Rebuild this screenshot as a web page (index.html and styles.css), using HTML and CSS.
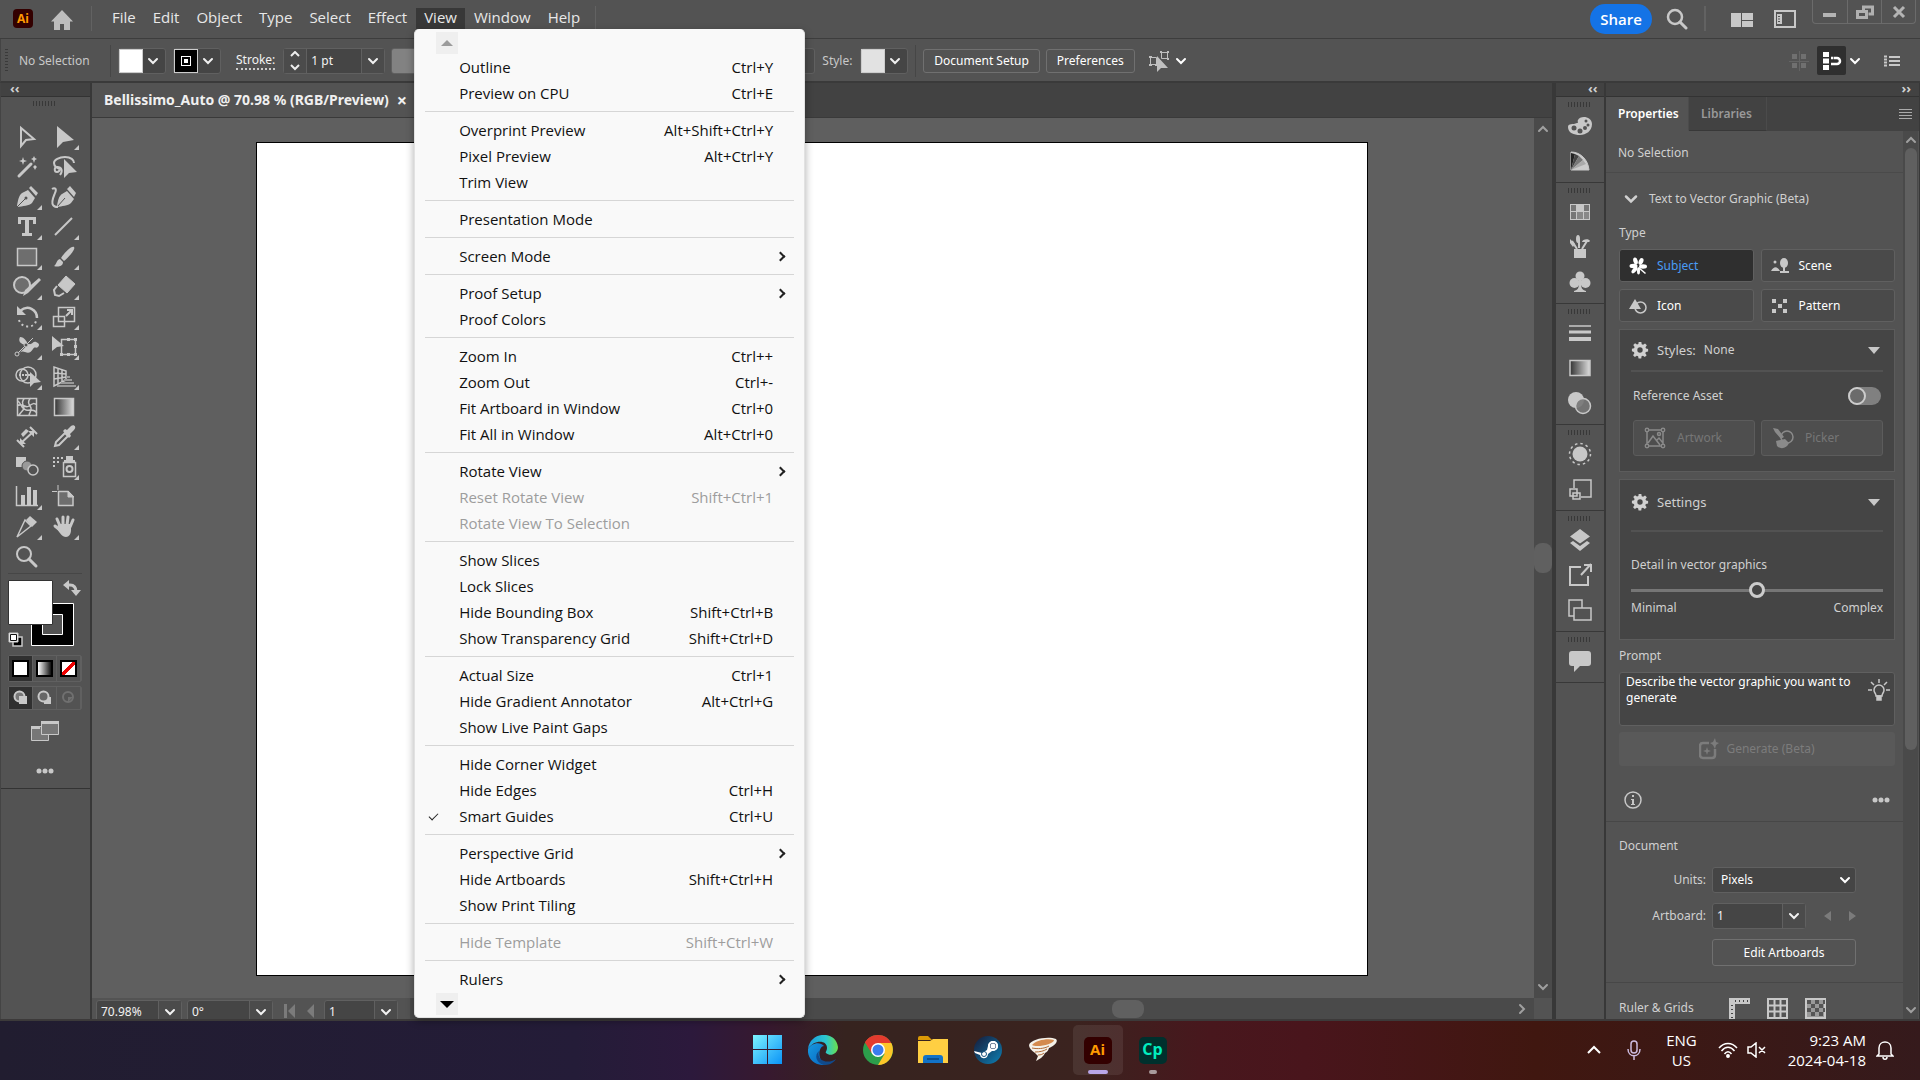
FILE: index.html
```html
<!DOCTYPE html>
<html lang="en">
<head>
<meta charset="utf-8">
<title>Bellissimo_Auto - Illustrator</title>
<link rel="stylesheet" href="styles.css">
</head>
<body>
<svg class="sprite" aria-hidden="true">
  <symbol id="chev" viewBox="0 0 12 8"><path d="M2 2l4 4 4-4" fill="none" stroke="currentColor" stroke-width="2" stroke-linecap="round"/></symbol>
  <symbol id="gear" viewBox="0 0 20 20"><path fill="currentColor" fill-rule="evenodd" d="M8.500 1h3l.4 2.600 1.500.6 2.200-1.500 2 2-1.500 2.200.6 1.500 2.300.4v3l-2.500.4-.6 1.500 1.500 2.100-2 2-2.200-1.500-1.500.6-.3 2.500h-3l-.5-2.500-1.500-.6-2.100 1.500-2-2 1.500-2.200-.6-1.500L1 11.500v-3l2.400-.4.6-1.500-1.500-2.200 2-2L6.700 4l1.500-.6zM10 7a3 3 0 1 0 0 6 3 3 0 0 0 0-6z"/></symbol>
  <symbol id="tri" viewBox="0 0 32 30"><path d="M31 23v5h-5z" fill="#c8c8c8"/></symbol>
</svg>

<div class="app">
  <header class="titlebar">
    <span class="ai-logo">Ai</span>
    <button class="bare home" aria-label="Home"><svg width="24" height="22" viewBox="0 0 24 22"><path d="M12 1L1 12.500h3V21h6v-6h4v6h6v-8.500h3z" fill="#bdbdbd"/></svg></button>
    <nav class="menubar">
      <button>File</button><button>Edit</button><button>Object</button><button>Type</button><button>Select</button><button>Effect</button>
      <div class="menu-anchor">
        <button class="open">View</button>
        <div class="menu">
          <button class="scroller up" aria-label="Scroll up"></button>
          <ul>
            <li><button>Outline<kbd>Ctrl+Y</kbd></button></li>
            <li><button>Preview on CPU<kbd>Ctrl+E</kbd></button></li>
            <li class="sep"></li>
            <li><button>Overprint Preview<kbd>Alt+Shift+Ctrl+Y</kbd></button></li>
            <li><button>Pixel Preview<kbd>Alt+Ctrl+Y</kbd></button></li>
            <li><button>Trim View</button></li>
            <li class="sep"></li>
            <li><button>Presentation Mode</button></li>
            <li class="sep"></li>
            <li><button class="sub">Screen Mode</button></li>
            <li class="sep"></li>
            <li><button class="sub">Proof Setup</button></li>
            <li><button>Proof Colors</button></li>
            <li class="sep"></li>
            <li><button>Zoom In<kbd>Ctrl++</kbd></button></li>
            <li><button>Zoom Out<kbd>Ctrl+-</kbd></button></li>
            <li><button>Fit Artboard in Window<kbd>Ctrl+0</kbd></button></li>
            <li><button>Fit All in Window<kbd>Alt+Ctrl+0</kbd></button></li>
            <li class="sep"></li>
            <li><button class="sub">Rotate View</button></li>
            <li><button disabled>Reset Rotate View<kbd>Shift+Ctrl+1</kbd></button></li>
            <li><button disabled>Rotate View To Selection</button></li>
            <li class="sep"></li>
            <li><button>Show Slices</button></li>
            <li><button>Lock Slices</button></li>
            <li><button>Hide Bounding Box<kbd>Shift+Ctrl+B</kbd></button></li>
            <li><button>Show Transparency Grid<kbd>Shift+Ctrl+D</kbd></button></li>
            <li class="sep"></li>
            <li><button>Actual Size<kbd>Ctrl+1</kbd></button></li>
            <li><button>Hide Gradient Annotator<kbd>Alt+Ctrl+G</kbd></button></li>
            <li><button>Show Live Paint Gaps</button></li>
            <li class="sep"></li>
            <li><button>Hide Corner Widget</button></li>
            <li><button>Hide Edges<kbd>Ctrl+H</kbd></button></li>
            <li><button class="checked">Smart Guides<kbd>Ctrl+U</kbd></button></li>
            <li class="sep"></li>
            <li><button class="sub">Perspective Grid</button></li>
            <li><button>Hide Artboards<kbd>Shift+Ctrl+H</kbd></button></li>
            <li><button>Show Print Tiling</button></li>
            <li class="sep"></li>
            <li><button disabled>Hide Template<kbd>Shift+Ctrl+W</kbd></button></li>
            <li class="sep"></li>
            <li><button class="sub">Rulers</button></li>
          </ul>
          <button class="scroller down" aria-label="Scroll down"></button>
        </div>
      </div>
      <button>Window</button><button>Help</button>
    </nav>
    <div class="title-right">
      <button class="share">Share</button>
      <button class="bare" aria-label="Search"><svg width="22" height="22" viewBox="0 0 22 22" fill="none" stroke="#c8c8c8"><circle cx="9" cy="9" r="7" stroke-width="2.500"/><path d="M14 14l6 6" stroke-width="3" stroke-linecap="round"/></svg></button>
      <span class="tb-rule"></span>
      <button class="bare workspace" aria-label="Arrange documents"><svg width="24" height="16" viewBox="0 0 24 16" fill="#c8c8c8"><path d="M1 1h10v14H1zM12 1h11v7H12zM12 9h11v6H12z"/></svg></button>
      <button class="bare" aria-label="Workspace"><svg width="22" height="18" viewBox="0 0 22 18"><rect x="1" y="1" width="20" height="16" fill="none" stroke="#c8c8c8" stroke-width="2"/><rect x="3" y="4" width="5" height="10" fill="#c8c8c8"/><path d="M4 6.500h2M4 9h2M4 11.500h2" stroke="#535353"/></svg></button>
      <div class="win-buttons">
        <button aria-label="Minimize"><svg width="14" height="14"><path d="M0 8h13v4H0z" fill="#b4b4b4"/></svg></button>
        <button aria-label="Restore"><svg width="18" height="16" viewBox="0 0 18 16" fill="none" stroke="#b0b0b0" stroke-width="3"><path d="M7.500 5V2h9v7h-4"/><path d="M1.500 6.500h9v6h-9z"/></svg></button>
        <button aria-label="Close"><svg width="14" height="14" viewBox="0 0 14 14"><path d="M2 2l10 10M12 2L2 12" stroke="#b4b4b4" stroke-width="3"/></svg></button>
      </div>
    </div>
  </header>

  <section class="controlbar">
    <span class="vgrip"></span>
    <span class="cb-label">No Selection</span>
    <span class="cb-rule"></span>
    <button class="swatch-dd" aria-label="Fill"><i class="chip white"></i><svg width="12" height="8"><use href="#chev"/></svg></button>
    <button class="swatch-dd" aria-label="Stroke color"><i class="chip ring"></i><svg width="12" height="8"><use href="#chev"/></svg></button>
    <label class="stroke-label" for="stroke">Stroke:</label>
    <div class="field stroke-field">
      <button class="stepper" aria-label="Step"><svg width="10" height="20" viewBox="0 0 10 20" fill="none" stroke="#eee" stroke-width="2"><path d="M1 5l4-4 4 4M1 14l4 4 4-4"/></svg></button>
      <input id="stroke" value="1 pt">
      <button aria-label="Stroke weights"><svg width="12" height="8"><use href="#chev"/></svg></button>
    </div>
    <span class="profile"></span>
    <span class="cb-label style-label">Style:</span>
    <button class="swatch-dd" aria-label="Graphic style"><i class="chip pale"></i><svg width="12" height="8"><use href="#chev"/></svg></button>
    <span class="cb-rule"></span>
    <button class="outlined">Document Setup</button>
    <button class="outlined">Preferences</button>
    <button class="bare similar" aria-label="Select similar"><svg width="22" height="22" viewBox="0 0 22 22"><g fill="none" stroke="#c0c0c0"><path d="M2.500 7.500h6v7h-6zM13.500 2.500h6v6h-6z"/></g><path d="M1 6h3v2H1zM1 14h3v2H1zM7 14h2v2H7zM12 1h2v2h-2zM19 1h2v2h-2zM19 8h2v2h-2zM9 6v16l4-4h7z" fill="#c0c0c0"/></svg><svg width="12" height="8"><use href="#chev"/></svg></button>
    <div class="cb-right">
      <svg width="20" height="20" viewBox="0 0 20 20" fill="#707070"><path d="M3 3h5v5H3zM12 3h5v5h-5zM3 12h5v5H3zM12 12h5v5h-5z"/><path d="M10 0h1v20h-1zM0 10h20v1H0z" fill="#646464"/></svg>
      <button class="snap" aria-label="Snap"><svg width="20" height="20" viewBox="0 0 20 20"><path d="M1 1h6v5H1zM1 7.500h6v5H1zM1 14h6v5H1z" fill="#fff"/><path d="M9 7h6a3 3 0 0 1 0 6H9" fill="none" stroke="#fff" stroke-width="2.500" stroke-dasharray="2 .6 20"/></svg></button>
      <svg class="light" width="12" height="8"><use href="#chev"/></svg>
      <svg class="list-ico" width="16" height="12" viewBox="0 0 16 12"><path d="M0 1.500h3M0 4.500h3M0 7.500h3M0 10.500h3M5 2h11M5 6h11M5 10h11" stroke="#c8c8c8" stroke-width="2"/></svg>
    </div>
  </section>

  <div class="workspace-row">
    <aside class="tools">
      <div class="collapse">‹‹</div>
      <div class="tools-body">
        <span class="grip"></span>
        <div class="tool-grid">
          <button aria-label="Selection"><svg viewBox="0 0 32 30"><path d="M10 6v18l5-6 8-1z" fill="none" stroke="#c8c8c8" stroke-width="2"/></svg></button>
          <button aria-label="Direct selection"><svg viewBox="0 0 32 30"><path d="M9 4v22l6-6 11-2z" fill="#c8c8c8"/><use href="#tri"/></svg></button>
          <button aria-label="Magic wand"><svg viewBox="0 0 32 30"><path d="M8 24L20 12" stroke="#c8c8c8" stroke-width="3" stroke-linecap="round"/><path d="M12 5l1 3 3 1-3 1-1 3-1-3-3-1 3-1zM23 4l1 2 2 1-2 1-1 3-1-3-2-1 2-1zM24 13l1 1 1 1-1 1-1 2-1-2-1-1 1-1z" fill="#c8c8c8"/></svg></button>
          <button aria-label="Lasso"><svg viewBox="0 0 32 30"><path d="M14 17c-5 0-8-3-8-6s5-6 11-6 9 3 9 6M9 15c-3 0-3 5 0 5s4-6 0-5m0 0c5 0 6 4 3 8" fill="none" stroke="#c8c8c8" stroke-width="2"/><path d="M16 7v19l5-5 8-1z" fill="#c8c8c8"/></svg></button>
          <button aria-label="Pen"><svg viewBox="0 0 32 30"><path d="M6 24c1-6 2-11 5-13l6-3 7 8-3 5c-3 3-9 3-15 4zM18 6l2-2 7 7-2 3z" fill="#c8c8c8"/><path d="M6 25l9-9" stroke="#535353"/><circle cx="15" cy="16" r="1.500" fill="#535353"/><use href="#tri"/></svg></button>
          <button aria-label="Curvature"><svg viewBox="0 0 32 30"><path d="M9 24c1-6 2-10 5-12l5-3 7 8-3 4c-3 3-9 3-14 4zM19 7l3-3 6 7-2 4z" fill="#c8c8c8"/><path d="M9 25l8-9" stroke="#535353"/><path d="M4 7c3-2 5 0 3 4-2 5-4 9-2 12 1 2 3 2 5 2" fill="none" stroke="#c8c8c8" stroke-width="2"/></svg></button>
          <button aria-label="Type"><svg viewBox="0 0 32 30"><path d="M7 5h18v7h-3V8h-4v13h3v3H11v-3h3V8h-4v4H7z" fill="#c8c8c8"/><use href="#tri"/></svg></button>
          <button aria-label="Line"><svg viewBox="0 0 32 30"><path d="M7 23L24 6" stroke="#c8c8c8" stroke-width="2"/><use href="#tri"/></svg></button>
          <button aria-label="Rectangle"><svg viewBox="0 0 32 30"><path d="M6.500 6.500h19v17h-19z" fill="#6e6e6e" stroke="#c8c8c8" stroke-width="1.500"/><use href="#tri"/></svg></button>
          <button aria-label="Paintbrush"><svg viewBox="0 0 32 30"><path d="M26 5c2 2-6 11-10 14l-3-3C16 11 24 3 26 5zM12 17l3 3c0 5-6 5-9 4 3-2 2-6 6-7z" fill="#c8c8c8"/><use href="#tri"/></svg></button>
          <button aria-label="Shaper"><svg viewBox="0 0 32 30"><circle cx="11" cy="13" r="8" fill="#6e6e6e" stroke="#c8c8c8" stroke-width="2"/><path d="M28 6l2 2-13 13-5 3 2-6z" fill="#c8c8c8"/><use href="#tri"/></svg></button>
          <button aria-label="Eraser"><svg viewBox="0 0 32 30"><path d="M18 4l9 8-8 9-9-8z" fill="#c8c8c8" stroke="#c8c8c8"/><path d="M9 14l-3 4 1 5 4 1 5-3" fill="none" stroke="#c8c8c8" stroke-width="2"/><use href="#tri"/></svg></button>
          <button aria-label="Rotate"><svg viewBox="0 0 32 30"><path d="M9 9c8-7 17-1 17 7" fill="none" stroke="#c8c8c8" stroke-width="2.500"/><path d="M6 4v9h9z" fill="#c8c8c8"/><path d="M8 18c2 8 15 9 17 1" fill="none" stroke="#c8c8c8" stroke-width="2" stroke-dasharray="2 3"/><use href="#tri"/></svg></button>
          <button aria-label="Scale"><svg viewBox="0 0 32 30"><path d="M10.500 5.500h16v14h-16zM5.500 14.500h11v10h-11z" fill="none" stroke="#c8c8c8" stroke-width="1.500"/><path d="M18 14l6-6M19 8h5v5" fill="none" stroke="#c8c8c8" stroke-width="2"/><use href="#tri"/></svg></button>
          <button aria-label="Width"><svg viewBox="0 0 32 30"><path d="M9 5c5 0 6 5 9 7 3 1 4-3 7-2s4 3 2 5-3-1-5 2-4 5-8 3-5 2-8 1l9-8C9 12 7 9 9 5z" fill="#c8c8c8"/><path d="M7 21L22 6" stroke="#535353" stroke-width="2"/><path d="M7 21L22 6" stroke="#c8c8c8"/><circle cx="6" cy="22" r="2" fill="#535353" stroke="#c8c8c8"/><circle cx="15" cy="13" r="2" fill="#535353" stroke="#c8c8c8"/><use href="#tri"/></svg></button>
          <button aria-label="Free transform"><svg viewBox="0 0 32 30"><path d="M13.500 7.500h14v15h-14z" fill="none" stroke="#c8c8c8" stroke-width="1.500"/><path d="M4 4v15l5-4 7-1zM26 6h3v3h-3zM26 13h3v3h-3zM26 21h3v3h-3zM19 21h3v3h-3zM12 21h3v3h-3zM19 6h3v3h-3z" fill="#c8c8c8"/><use href="#tri"/></svg></button>
          <button aria-label="Shape builder"><svg viewBox="0 0 32 30"><circle cx="17" cy="13" r="8" fill="none" stroke="#c8c8c8" stroke-width="1.500"/><circle cx="11" cy="13" r="6" fill="none" stroke="#c8c8c8" stroke-width="1.500"/><path d="M8 13h12" stroke="#c8c8c8" stroke-width="2" stroke-dasharray="2 1"/><path d="M19 10v15l4-4 7-1z" fill="#c8c8c8"/><use href="#tri"/></svg></button>
          <button aria-label="Perspective grid"><svg viewBox="0 0 32 30"><path d="M6 5v19l12-6V9zM10 6v16M14 8v12M6 11l12 1M6 17l12-2" fill="none" stroke="#c8c8c8" stroke-width="1.500"/><path d="M18 15h4M16 18h8M13 21h13M9 24h19" stroke="#999" stroke-width="2"/><use href="#tri"/></svg></button>
          <button aria-label="Mesh"><svg viewBox="0 0 32 30"><path d="M6.500 6.500h19v17h-19zM6 14c5-4 8 3 12 0s5-3 8-1M8 23c5-7 6-5 4-10s1-4 1-7M20 6c-5 4-1 7 0 10s-2 4-2 8M6 8c5 4 4 9 9 10s7-2 11 3" fill="none" stroke="#c8c8c8" stroke-width="1.500"/></svg></button>
          <button aria-label="Gradient"><svg viewBox="0 0 32 30"><defs><linearGradient id="g1"><stop offset="0" stop-color="#333"/><stop offset="1" stop-color="#ddd"/></linearGradient></defs><path d="M6.500 6.500h19v17h-19z" fill="url(#g1)" stroke="#c8c8c8" stroke-width="1.500"/></svg></button>
          <button aria-label="Measure"><svg viewBox="0 0 32 30"><path d="M9 22L23 9M6 18l7 7M19 5l7 7" stroke="#c8c8c8" stroke-width="2"/><path d="M9 16v6h6zM23 15V9h-6zM10 12l5-5 3 2-6 6z" fill="#c8c8c8"/></svg></button>
          <button aria-label="Eyedropper"><svg viewBox="0 0 32 30"><path d="M17 11l3 3-9 9-4 1 1-4z" fill="none" stroke="#c8c8c8" stroke-width="2"/><path d="M15 9l2-2 2 1 4-4c3-2 6 1 3 4l-4 4 1 2-2 2z" fill="#c8c8c8"/><use href="#tri"/></svg></button>
          <button aria-label="Blend"><svg viewBox="0 0 32 30"><path d="M5 5h10v10H5z" fill="#c8c8c8"/><circle cx="16" cy="14" r="5" fill="#999" stroke="#535353"/><circle cx="22" cy="18" r="5" fill="#535353" stroke="#c8c8c8" stroke-width="1.500"/></svg></button>
          <button aria-label="Symbol sprayer"><svg viewBox="0 0 32 30"><path d="M15.500 10.500h12v14h-12z" fill="none" stroke="#c8c8c8" stroke-width="1.500"/><circle cx="21.500" cy="17" r="3" fill="none" stroke="#c8c8c8" stroke-width="2"/><path d="M18 4h7v4h2v3H16V8h2z" fill="#c8c8c8"/><path d="M5 6h2M9 6h2M13 6h2M5 10h2M9 10h2M5 14h2" stroke="#c8c8c8" stroke-width="2"/><use href="#tri"/></svg></button>
          <button aria-label="Graph"><svg viewBox="0 0 32 30"><path d="M5.500 4v19.500H27" fill="none" stroke="#c8c8c8" stroke-width="1.500"/><path d="M10 13h4v10h-4zM16 5h4v18h-4zM22 8h4v15h-4z" fill="#c8c8c8"/><use href="#tri"/></svg></button>
          <button aria-label="Artboard"><svg viewBox="0 0 32 30"><path d="M10.500 9.500H20l5 5v9H10.500z" fill="#6e6e6e" stroke="#c8c8c8" stroke-width="1.500"/><path d="M20 9v6h6zM10 3v5M4 9.500h5" fill="#c8c8c8" stroke="#c8c8c8"/></svg></button>
          <button aria-label="Slice"><svg viewBox="0 0 32 30"><path d="M6 25l8-17 6 6z" fill="none" stroke="#c8c8c8" stroke-width="1.500"/><path d="M15 8l4-4 7 6-5 5z" fill="#c8c8c8"/><use href="#tri"/></svg></button>
          <button aria-label="Hand"><svg viewBox="0 0 32 30"><path d="M12 14L9 7M15 13V5M19 13l1-8M22 15l3-7M12 18l-5-4" stroke="#c8c8c8" stroke-width="3" stroke-linecap="round"/><path d="M10 12h13v6c0 4-2 7-5 7-4 0-6-4-9-8z" fill="#c8c8c8"/><use href="#tri"/></svg></button>
          <button aria-label="Zoom"><svg viewBox="0 0 32 30"><circle cx="13" cy="12" r="7" fill="none" stroke="#c8c8c8" stroke-width="2"/><path d="M18 17l7 7" stroke="#c8c8c8" stroke-width="3" stroke-linecap="round"/></svg></button>
        </div>
        <hr>
        <svg class="fillstroke" width="74" height="70" viewBox="0 0 74 70"><path d="M23.500 23.500h42v42h-42z" fill="#000" stroke="#fff"/><path d="M34.500 34.500h20v20h-20z" fill="#535353" stroke="#fff"/><path d="M.5.5h44v44H.5z" fill="#fff" stroke="#333"/><path d="M58 5h4c4 0 6 2 6 7" fill="none" stroke="#c8c8c8" stroke-width="3"/><path d="M55 5l6-5v10zM63 10h10l-5 6z" fill="#c8c8c8"/><path d="M5 57h9v9H5z" fill="#000" stroke="#c8c8c8" stroke-width="1.500"/><path d="M1 53h9v9H1z" fill="#fff" stroke="#c8c8c8"/><path d="M2.500 54.500h6v6h-6z" fill="#fff" stroke="#111"/></svg>
        <div class="mode-row"><button class="on" aria-label="Color"><i class="m-white"></i></button><button aria-label="Gradient fill"><i class="m-grad"></i></button><button aria-label="None"><i class="m-none"></i></button></div>
        <div class="mode-row draw"><button class="on" aria-label="Draw normal"><svg width="16" height="16"><circle cx="6.500" cy="6.500" r="5" fill="#777" stroke="#c8c8c8" stroke-width="2"/><path d="M6 6h8v8H6z" fill="#c8c8c8"/></svg></button><button aria-label="Draw behind"><svg width="16" height="16"><path d="M7 7h7v7H7z" fill="#c8c8c8"/><circle cx="6.500" cy="6.500" r="5" fill="#666" stroke="#c8c8c8" stroke-width="2"/></svg></button><button aria-label="Draw inside"><svg width="16" height="16"><circle cx="7" cy="7" r="5" fill="none" stroke="#707070" stroke-width="2"/><path d="M7 7h5l-5 5z" fill="#707070"/></svg></button></div>
        <svg class="screenmode" width="30" height="22" viewBox="0 0 30 22" fill="#777" stroke="#c8c8c8"><path d="M1.500 6.500h17v14h-17z"/><path d="M11.500 1.500h17v13h-17z"/><path d="M11 2.500h18M1 7.500h9" stroke-width="3"/></svg>
        <svg class="dots" width="18" height="6" fill="#c8c8c8"><circle cx="3" cy="3" r="2.500"/><circle cx="9" cy="3" r="2.500"/><circle cx="15" cy="3" r="2.500"/></svg>
      </div>
    </aside>

    <main class="document">
      <div class="tabs"><div class="tab">Bellissimo_Auto @ 70.98 % (RGB/Preview)<button class="bare" aria-label="Close tab">×</button></div></div>
      <div class="stage">
        <div class="canvas"><div class="artboard"></div></div>
        <div class="vscroll"><svg class="flip" width="12" height="8"><use href="#chev"/></svg><span class="thumb"></span><svg width="12" height="8"><use href="#chev"/></svg></div>
      </div>
      <div class="status">
        <div class="field zoomf"><input aria-label="Zoom" value="70.98%"><button aria-label="Zoom levels"><svg width="12" height="8"><use href="#chev"/></svg></button></div>
        <div class="field zoomf rot"><input aria-label="Rotation" value="0°"><button aria-label="Rotations"><svg width="12" height="8"><use href="#chev"/></svg></button></div>
        <svg class="pager" width="32" height="16" fill="#7b7b7b"><path d="M0 1h3v14H0zM11 1v14L4 8zM30 1v14l-7-7z"/></svg>
        <div class="field pagef"><input aria-label="Artboard number" value="1"><button aria-label="Artboards"><svg width="12" height="8"><use href="#chev"/></svg></button></div>
        <div class="hscroll"><span class="thumb"></span><svg class="right" width="12" height="8"><use href="#chev"/></svg></div>
      </div>
    </main>

    <aside class="dock">
      <div class="collapse">‹‹</div>
      <div class="dock-group"><span class="grip"></span>
        <button aria-label="Color"><svg viewBox="0 0 24 24"><path d="M10 6c2-5 14-4 14 4 0 7-6 11-12 11S0 19 0 13c0-4 5-2 9-4 2 0 0-2 1-3z" fill="#c8c8c8"/><g fill="#535353"><circle cx="6" cy="14" r="2.500"/><circle cx="12" cy="17" r="2.500"/><circle cx="17" cy="14" r="2"/><circle cx="20" cy="11" r="1.500"/><circle cx="18" cy="7" r="1.500"/></g></svg></button>
        <button aria-label="Color guide"><svg viewBox="0 0 24 24"><path d="M3 21V3c9 0 17 7 18 18z" fill="#ccc" stroke="#c8c8c8"/><path d="M3 21V4l4 1z" fill="#222"/><path d="M3 21L7 5l4 2z" fill="#444"/><path d="M3 21l8-14 4 4z" fill="#777"/><path d="M3 21l12-10 3 4z" fill="#aaa"/></svg></button></div>
      <div class="dock-group"><span class="grip"></span>
        <button aria-label="Swatches"><svg viewBox="0 0 24 24"><path d="M2 4h20v16H2z" fill="#c8c8c8"/><path d="M3 5h5v6H3zM16 5h5v6h-5zM3 12h5v7H3z" fill="#777"/><path d="M9 12h6v7H9zM16 12h5v7h-5z" fill="#888"/></svg></button>
        <button aria-label="Brushes"><svg viewBox="0 0 24 24"><path d="M6 14h12v9H6z" fill="#c8c8c8"/><path d="M9 14L4 6M11 13V4M14 14l5-8" stroke="#c8c8c8" stroke-width="2"/><ellipse cx="10" cy="4" rx="2" ry="4" fill="#c8c8c8"/><path d="M2 4l5 5-2 3-3-4zM14 7c0-3 7-4 8-1l-1 1z" fill="#c8c8c8"/></svg></button>
        <button aria-label="Symbols"><svg viewBox="0 0 24 24" fill="#c8c8c8"><circle cx="12" cy="6" r="4.500"/><circle cx="6.500" cy="13" r="5"/><circle cx="17.500" cy="13" r="5"/><path d="M10 9h4l-1 3c0 6 1 8 5 9v1H6v-1c4-1 5-3 5-9z"/></svg></button></div>
      <div class="dock-group"><span class="grip"></span>
        <button aria-label="Stroke"><svg viewBox="0 0 24 24" stroke="#c8c8c8"><path d="M1 5h22" stroke-width="1.500"/><path d="M1 11h22" stroke-width="3"/><path d="M1 18h22" stroke-width="4"/></svg></button>
        <button aria-label="Gradient"><svg viewBox="0 0 24 24"><path d="M2 4.500h20v15H2z" fill="url(#g1)" stroke="#c8c8c8" stroke-width="1.500"/></svg></button>
        <button aria-label="Transparency"><svg viewBox="0 0 24 24"><circle cx="8" cy="9" r="8" fill="#c8c8c8"/><circle cx="15" cy="15" r="7.500" fill="#777" fill-opacity=".9" stroke="#c8c8c8" stroke-width="1.500"/></svg></button></div>
      <div class="dock-group"><span class="grip"></span>
        <button aria-label="Appearance"><svg viewBox="0 0 24 24"><circle cx="12" cy="12" r="7.500" fill="#c8c8c8"/><circle cx="12" cy="12" r="10.500" fill="none" stroke="#c8c8c8" stroke-width="1.500" stroke-dasharray="2.500 3"/></svg></button>
        <button aria-label="Graphic styles"><svg viewBox="0 0 24 24" fill="none" stroke="#c8c8c8" stroke-width="1.500"><path d="M6 11V3h17v17H13"/><path d="M2 12h7v7H2z"/><path d="M5 16h7v6H5z"/></svg></button></div>
      <div class="dock-group"><span class="grip"></span>
        <button aria-label="Layers"><svg viewBox="0 0 24 24" fill="#c8c8c8"><path d="M12 1l10 7.500-10 7L2 8.500zM2 15l3-2 7 5 7-5 3 2-10 8z"/></svg></button>
        <button aria-label="Asset export"><svg viewBox="0 0 24 24" fill="none" stroke="#c8c8c8" stroke-width="2"><path d="M13 4H2v18h18v-9"/><path d="M13 12L23 1M16 2h7v7"/></svg></button>
        <button aria-label="Artboards"><svg viewBox="0 0 24 24" stroke="#c8c8c8" stroke-width="1.500" fill="#535353"><path d="M1 2h13v16H1z"/><path d="M6 10h17v12H6z"/></svg></button></div>
      <div class="dock-group"><span class="grip"></span>
        <button aria-label="Comments"><svg viewBox="0 0 24 24"><path d="M4 2h16q3 0 3 3v9q0 3-3 3h-8l-6 6v-6H4q-3 0-3-3V5q0-3 3-3z" fill="#c8c8c8"/></svg></button></div>
    </aside>

    <aside class="panel">
      <div class="collapse right">››</div>
      <div class="panel-tabs"><button class="active">Properties</button><button>Libraries</button><span class="burger"></span></div>
      <div class="panel-body">
        <div class="props">
          <p class="sel">No Selection</p>
          <section class="t2v">
            <h2><svg width="16" height="10"><use href="#chev"/></svg>Text to Vector Graphic (Beta)</h2>
            <p class="cap">Type</p>
            <div class="types">
              <button class="on"><svg viewBox="0 0 18 18"><g fill="#fff"><ellipse cx="6.500" cy="4" rx="2.200" ry="3.500" transform="rotate(-15 6.500 4)"/><ellipse cx="12" cy="4.500" rx="2.200" ry="3.500" transform="rotate(25 12 4.500)"/><ellipse cx="14" cy="9.500" rx="4" ry="2.200"/><ellipse cx="4.500" cy="9" rx="4" ry="2.200"/><ellipse cx="5.500" cy="13" rx="4" ry="2" transform="rotate(-50 5.500 13)"/><ellipse cx="9.500" cy="14" rx="1.500" ry="3.500"/><path d="M10 10l7 6-1 1-7-6z"/></g></svg>Subject</button>
              <button><svg viewBox="0 0 18 18" fill="#c8c8c8"><path d="M0 14c3-5 6-5 9 0zM9 14h9v2H9zM12 8h2v7h-2z"/><circle cx="4" cy="5" r="1.500"/><ellipse cx="13" cy="6" rx="4" ry="5"/></svg>Scene</button>
              <button><svg viewBox="0 0 18 18"><path d="M6 2l6 10H0z" fill="#c8c8c8"/><circle cx="11.500" cy="10.500" r="5.500" fill="none" stroke="#c8c8c8" stroke-width="1.500"/></svg>Icon</button>
              <button><svg viewBox="0 0 18 18" fill="#c8c8c8"><path d="M1 2h4v4H1zM12 2h4v4h-4zM7 7h4v4H7zM1 12h4v4H1zM12 12h4v4h-4z"/></svg>Pattern</button>
            </div>
            <div class="box styles-box">
              <div class="box-head"><svg width="18" height="18"><use href="#gear"/></svg><span>Styles:</span><span class="small">None</span><i class="caret"></i></div>
              <div class="toggle-row"><label for="ref">Reference Asset</label><input type="checkbox" id="ref"></div>
              <div class="asset-row">
                <button disabled><svg viewBox="0 0 22 22" fill="none" stroke="#8a8a8a" stroke-width="1.500"><path d="M3 3h16v16H3zM4 16l5-7 7 9M13 13l2-2 4 5"/><circle cx="15" cy="7" r="1.500"/><g fill="#454545"><circle cx="3" cy="3" r="1.700"/><circle cx="19" cy="3" r="1.700"/><circle cx="3" cy="19" r="1.700"/><circle cx="19" cy="19" r="1.700"/></g></svg>Artwork</button>
                <button disabled><svg viewBox="0 0 22 22"><circle cx="15" cy="10" r="6" fill="none" stroke="#8a8a8a" stroke-width="1.500"/><path d="M1 1l5 1 6 8-3 2-6-7zM4 14l9-2 4 4c-2 5-8 7-12 3z" fill="#8a8a8a"/></svg>Picker</button>
              </div>
            </div>
            <div class="box settings-box">
              <div class="box-head"><svg width="18" height="18"><use href="#gear"/></svg><span>Settings</span><i class="caret"></i></div>
              <label for="detail">Detail in vector graphics</label>
              <input type="range" id="detail" min="0" max="100" value="50">
              <div class="ends"><span>Minimal</span><span>Complex</span></div>
            </div>
            <label class="cap prompt-cap" for="prompt">Prompt</label>
            <div class="prompt"><textarea id="prompt">Describe the vector graphic you want to generate</textarea><svg width="22" height="24" viewBox="0 0 22 24" fill="none" stroke="#c8c8c8" stroke-width="1.500"><path d="M11 0v4M3 3l3 3M19 3l-3 3M0 11h4M18 11h4M8 17c0-3-2-3-2-6a5 5 0 0 1 10 0c0 3-2 3-2 6z"/><path d="M9 17h4v4H9z" fill="#c8c8c8"/></svg></div>
            <button class="generate" disabled><svg width="20" height="22" viewBox="0 0 20 22"><path d="M10 5H4q-3 0-3 3v9q0 3 3 3h9q3 0 3-3v-6" fill="none" stroke="#7c7c7c" stroke-width="2.500"/><path d="M16 0l1 4 3 1-3 2-1 4-2-4-3-2 3-1zM8 9l1 3 3 1-3 1-1 3-1-3-3-1 3-1z" fill="#7c7c7c"/></svg>Generate (Beta)</button>
            <div class="info-row"><svg width="18" height="18" viewBox="0 0 18 18"><circle cx="9" cy="9" r="8" fill="none" stroke="#c8c8c8" stroke-width="1.500"/><path d="M7 8h3v5h1v1H7v-1h1V9H7zM8 4h2v2H8z" fill="#c8c8c8"/></svg><svg class="dots" width="18" height="6" fill="#c8c8c8"><circle cx="3" cy="3" r="2.500"/><circle cx="9" cy="3" r="2.500"/><circle cx="15" cy="3" r="2.500"/></svg></div>
          </section>
          <section class="docsec">
            <h3>Document</h3>
            <div class="form">
              <label for="units">Units:</label>
              <div class="selectwrap"><select id="units"><option>Pixels</option></select><svg width="12" height="8"><use href="#chev"/></svg></div>
              <label for="ab">Artboard:</label>
              <div class="ab-row"><div class="field"><input id="ab" value="1"><button aria-label="Choose artboard"><svg width="12" height="8"><use href="#chev"/></svg></button></div><svg width="32" height="12" fill="#7b7b7b"><path d="M7 1v10L0 6zM25 1v10l7-5z"/></svg></div>
              <span></span><button class="outlined">Edit Artboards</button>
            </div>
          </section>
          <section class="rulers"><h3>Ruler &amp; Grids</h3>
            <svg width="22" height="22" viewBox="0 0 22 22"><path d="M0 0h21v6H6v16H0z" fill="#c8c8c8"/><path d="M6 3h14M3 7v14" stroke="#444" stroke-width="2" stroke-dasharray="1 3"/></svg>
            <svg width="22" height="22" viewBox="0 0 22 22"><path d="M1 1h19v19H1zM7.500 1v19M13.500 1v19M1 7.500h19M1 13.500h19" fill="none" stroke="#c8c8c8" stroke-width="2"/></svg>
            <svg width="22" height="22" viewBox="0 0 22 22"><path d="M1 1h19v19H1z" fill="#999" stroke="#c8c8c8" stroke-width="2"/><path d="M2 4h18M2 12h18" stroke="#555" stroke-width="4" stroke-dasharray="4 4"/><path d="M6 8h14M6 16h14" stroke="#555" stroke-width="4" stroke-dasharray="4 4"/></svg>
          </section>
        </div>
        <div class="pscroll"><svg class="flip" width="12" height="8"><use href="#chev"/></svg><span class="thumb"></span><svg width="12" height="8"><use href="#chev"/></svg></div>
      </div>
    </aside>
  </div>
</div>

<footer class="taskbar">
  <span></span>
  <div class="apps">
    <button aria-label="Start"><svg width="30" height="30" viewBox="0 0 30 30"><defs><linearGradient id="w" x2="1" y2="1"><stop offset="0" stop-color="#7df3ff"/><stop offset="1" stop-color="#0a93f7"/></linearGradient></defs><path d="M0 0h14v14H0zM15 0h14v14H15zM0 15h14v14H0zM15 15h14v14H15z" fill="url(#w)"/></svg></button>
    <button aria-label="Edge"><svg width="30" height="30" viewBox="0 0 30 30"><defs><linearGradient id="e1"><stop offset="0" stop-color="#1b9de2"/><stop offset=".6" stop-color="#2cc6cf"/><stop offset="1" stop-color="#6be04a"/></linearGradient><linearGradient id="e2" y2="1"><stop offset="0" stop-color="#1799e0"/><stop offset="1" stop-color="#0766c0"/></linearGradient></defs><path d="M0 14C2-4 28-5 30 12c0 7-8 10-12 6-1-1 1-2 1-5 0-9-14-8-19 1z" fill="url(#e1)"/><path d="M0 14c3-6 12-8 16-3-5 0-8 13 2 19C7 31-1 24 0 14z" fill="url(#e2)"/><path d="M11 16c-3 9 8 14 17 8-3 5-8 6-12 6-8-2-10-10-5-14z" fill="#114a8b"/></svg></button>
    <button aria-label="Chrome"><svg width="30" height="30" viewBox="0 0 30 30"><circle cx="15" cy="15" r="15" fill="#2c9e4b"/><path d="M2 7.500a15 15 0 0 1 26 0L15 15z" fill="#e33b2e"/><path d="M2 7.500L8.500 18 15 8h13C24 1 8-3 2 7.500z" fill="#e33b2e"/><path d="M15 8h13.300C33 17 27 30 15 30l6.500-11z" fill="#fcc629"/><circle cx="15" cy="15" r="7" fill="#fff"/><circle cx="15" cy="15" r="5.500" fill="#3b7ded"/></svg></button>
    <button aria-label="Explorer"><svg width="30" height="28" viewBox="0 0 30 28"><path d="M0 2q0-2 2-2h8l4 4H0z" fill="#dc9a06"/><path d="M0 5h12l3-2h15v24H0z" fill="#ffcf42"/><path d="M5 27v-5q0-3 3-3h14q3 0 3 3v5z" fill="#1273c8"/><path d="M9 23h12" stroke="#08447e" stroke-width="1.500"/></svg></button>
    <button aria-label="Steam"><svg width="30" height="30" viewBox="0 0 30 30"><defs><linearGradient id="s" y2="1"><stop offset="0" stop-color="#171a38"/><stop offset="1" stop-color="#0d80b4"/></linearGradient></defs><circle cx="15" cy="15" r="14" fill="url(#s)"/><path d="M1 16l8 2 5-3 1-4c1-7 10-6 10 0 0 4-4 5-6 5l-4 3c0 5-7 6-8 1l-5-2z" fill="#fff"/><circle cx="20" cy="11" r="4" fill="#1a3358" stroke="#fff" stroke-width="2"/><circle cx="20" cy="11" r="2.500" fill="#fff"/><circle cx="11" cy="19" r="2.500" fill="none" stroke="#1a5580"/></svg></button>
    <button aria-label="Tornado"><svg width="30" height="26" viewBox="0 0 30 26"><path d="M1 8C3 2 20-1 28 2c3 3-3 8-7 9-1 3-2 4-4 5-1 3-5 6-9 8l2-5-3-3C3 13 1 11 1 8z" fill="#f4f1e9"/><path d="M4 8C8 3 20 1 26 3c0 4-17 8-22 5z" fill="#d48a4e"/><path d="M4 11c5 1 12 1 17-2M7 15c5 0 9-1 12-3M10 18c3 0 5-1 6-2" fill="none" stroke="#b06a38"/></svg></button>
    <button class="current" aria-label="Illustrator"><span class="tile ai">Ai</span></button>
    <button class="running" aria-label="Captivate"><span class="tile cp">Cp</span></button>
  </div>
  <div class="tray">
    <svg width="14" height="10" viewBox="0 0 14 10"><path d="M1 8l6-6 6 6" fill="none" stroke="#fff" stroke-width="2"/></svg>
    <svg class="mic" width="16" height="20" viewBox="0 0 16 20" fill="none" stroke="#cdbce0" stroke-width="1.500"><rect x="5" y="1" width="6" height="12" rx="3"/><path d="M2 9c0 9 12 9 12 0M8 16v4"/></svg>
    <span class="lang">ENG<br>US</span>
    <svg width="20" height="16" viewBox="0 0 20 16" fill="none" stroke="#fff" stroke-width="1.500"><path d="M1 6c5-6 13-6 18 0M3.500 9c4-5 9-5 13 0M6.500 12c2-3 5-3 7 0"/><circle cx="10" cy="14" r="1.200" fill="#fff"/></svg>
    <svg class="vol" width="20" height="16" viewBox="0 0 20 16" fill="none" stroke="#fff" stroke-width="1.500"><path d="M1 5h3l5-4v14l-5-4H1zM12 5l6 6M18 5l-6 6"/></svg>
    <span class="clock">9:23 AM<br>2024-04-18</span>
    <svg width="18" height="20" viewBox="0 0 18 20" fill="none" stroke="#fff" stroke-width="1.500"><path d="M3 14V8c0-8 12-8 12 0v6l2 2H1zM7 17c0 3 4 3 4 0"/></svg>
  </div>
</footer>
</body>
</html>
```
FILE: styles.css
```css
*, *::before, *::after { box-sizing: border-box; }
body {
  margin: 0;
  height: 100vh;
  display: flex;
  flex-direction: column;
  overflow: hidden;
  background: #535353;
  color: #d0d0d0;
  font: 12px/16px "Noto Sans", sans-serif;
}
button, input, select, textarea { font: inherit; color: inherit; margin: 0; padding: 0; border: 0; background: none; border-radius: 0; }
h2, h3, p, ul { margin: 0; padding: 0; font-size: inherit; font-weight: normal; list-style: none; }
svg { display: block; flex: none; }
.sprite { position: absolute; width: 0; height: 0; }
.app { flex: 1; min-height: 0; display: flex; flex-direction: column; border-bottom: 2px solid #3c3a3a; }
.bare { display: flex; align-items: center; }
.light { color: #fff; }

/* Title bar */
.titlebar { display: flex; align-items: flex-start; height: 39px; padding-left: 13px; border-bottom: 1px solid #3d3d3d; }
.ai-logo { width: 20px; height: 19px; margin-top: 9px; border-radius: 4px; background: #330000; color: #ff9a00; font: bold 12px/19px "Open Sans", sans-serif; text-align: center; }
.home { margin: 9px 17px 0 17px; }
.menubar { display: flex; gap: 1px; font: 15px/18px "Open Sans", sans-serif; color: #e8e8e8; height: 25px; margin-top: 6px; padding: 2px 7px 0 12px; border-left: 1px solid #626262; border-right: 1px solid #626262; }
.menubar > button, .menu-anchor > button { height: 21px; padding: 0 8px 3px; }
.menu-anchor { position: relative; }
.menu-anchor > .open { background: #383838; }
.menu {
  position: absolute; z-index: 5; left: -2px; top: 21px; width: 391px;
  padding: 3px 0 2px; border: 1px solid #e2e2e2; border-top: 0; border-radius: 5px;
  background: #f9f9f9; color: #111; box-shadow: 0 3px 8px #0005;
}
.menu li button { position: relative; display: flex; justify-content: space-between; width: 100%; height: 26px; padding: 0 31px 0 44px; font: 15px/24px "Open Sans", sans-serif; text-align: left; }
.menu kbd { font: inherit; }
.menu button:disabled { color: #9d9d9d; }
.sep { height: 1px; margin: 4px 10px 6px; background: #d6d6d6; }
.sub::after { content: ""; width: 7px; height: 7px; margin: 9px -11px 0 0; border: solid #222; border-width: 2px 2px 0 0; transform: rotate(45deg); }
.checked::before { content: ""; position: absolute; left: 14px; top: 9px; width: 9px; height: 5px; border: solid #222; border-width: 0 0 1px 1px; transform: rotate(-45deg); }
.scroller { display: flex; align-items: center; justify-content: center; width: 22px; height: 22px; margin-left: 21px; background: #efefef; }
.scroller::after { content: ""; border: 6px solid transparent; }
.up { margin-bottom: 1px; }
.up::after { border-bottom-color: #9b9b9b; border-top: 0; }
.down::after { border: 7px solid transparent; border-top-color: #000; border-bottom: 0; }
.title-right { display: flex; margin-left: auto; }
.title-right > .bare { height: 30px; margin-top: 4px; margin-right: 16px; }
.share { width: 62px; height: 30px; margin: 4px 14px 0 0; border-radius: 15px; background: #1473e6; color: #fff; font: 600 15px/30px "Open Sans", sans-serif; }
.tb-rule { width: 2px; height: 25px; margin: 6px 0 0; background: #626262; }
.title-right > .workspace { margin: 5px 20px 0 24px; }
.win-buttons { display: flex; height: 24px; margin-right: 4px; border: 1px solid #6b6b6b; border-top: 0; border-radius: 0 0 4px 4px; }
.win-buttons button { width: 34px; display: flex; justify-content: center; padding-top: 5px; }
.win-buttons button + button { border-left: 1px solid #6b6b6b; }

/* Control bar */
.controlbar { display: flex; align-items: center; height: 44px; padding: 1px 20px 0 4px; border-left: 1px solid #444; border-bottom: 2px solid #3a3a3a; }
.vgrip { width: 3px; height: 24px; margin-right: 11px; background: repeating-linear-gradient(#3a3a3a 0 1px, transparent 1px 3px); }
.cb-label { width: 91px; color: #c8c8c8; }
.cb-rule { width: 1px; height: 32px; background: #464646; margin-right: 7px; }
.swatch-dd { display: flex; align-items: center; justify-content: space-between; width: 48px; height: 26px; margin-right: 7px; padding-right: 6px; border: 1px solid #606060; border-radius: 3px; background: #454545; color: #f0f0f0; }
.chip { width: 24px; height: 24px; border: 1px solid #ccc; }
.white { background: #fff; }
.pale { background: #e2e2e2; }
.ring { background: radial-gradient(#fff, #fff) center/4px 4px no-repeat, #000; display: flex; align-items: center; justify-content: center; }
.ring::after { content: ""; width: 10px; height: 10px; border: 1px solid #fff; }
.stroke-label { margin: 0 8px; color: #f2f2f2; border-bottom: 2px dotted #ccc; }
.field { display: flex; height: 26px; border: 1px solid #606060; border-radius: 3px; background: #454545; color: #f2f2f2; }
.field input { flex: 1; min-width: 0; padding: 0 4px; }
.field button { display: flex; align-items: center; justify-content: center; width: 23px; border-left: 1px solid #606060; background: #4b4b4b; }
.field .stepper { border-left: 0; border-right: 1px solid #606060; }
.stroke-field { width: 102px; }
.profile { width: 424px; height: 26px; margin: 0 7px 0 6px; border: 1px solid #606060; background: linear-gradient(90deg, #828282 0 300px, #4b4b4b 300px); border-radius: 3px; }
.style-label { width: 38px; }
.outlined { height: 24px; border: 1px solid #707070; border-radius: 3px; color: #fff; padding: 0 10px; margin-right: 6px; }
.similar { gap: 5px; margin-left: 7px; color: #fff; }
.cb-right { display: flex; align-items: center; margin-left: auto; }
.snap { display: flex; align-items: center; justify-content: center; width: 29px; height: 29px; margin: 0 3px 0 8px; border-radius: 2px; background: #2f2f2f; }
.list-ico { margin-left: 23px; }

/* Work area */
.workspace-row { flex: 1; min-height: 0; display: flex; background: #383838; gap: 2px; }
.collapse { height: 14px; padding-left: 9px; background: #424242; border-bottom: 1px solid #333; font: bold 13px/10px "Open Sans", sans-serif; color: #d0d0d0; }
.grip { display: block; width: 24px; height: 5px; background: repeating-linear-gradient(90deg, #383838 0 1px, transparent 1px 3px); }
.tools { width: 90px; display: flex; flex-direction: column; border-left: 1px solid #444; background: #535353; }
.tools-body { height: 692px; padding: 4px 8px 0 7px; border-bottom: 1px solid #333; }
.tools-body > .grip { margin: 0 auto 16px; }
.tool-grid { display: grid; grid-template-columns: 37px 37px; grid-auto-rows: 30px; padding-left: 3px; width: 78px; }
.tool-grid svg { width: 32px; height: 30px; }
.tools hr { height: 1px; margin: 1px 0 6px; border: 0; background: #464646; }
.fillstroke { margin-bottom: 5px; }
.mode-row { display: flex; width: 74px; height: 27px; border: 1px solid #606060; border-radius: 2px; margin-bottom: 4px; }
.mode-row button { flex: 1; display: flex; align-items: center; justify-content: center; border-right: 1px solid #606060; }
.mode-row .on { background: #303030; }
.mode-row i { width: 17px; height: 17px; border: 2px solid #000; }
.m-white { background: #fff; }
.m-grad { background: linear-gradient(90deg, #fff, #111); }
.m-none { background: linear-gradient(135deg, #fff 40%, #e00 40% 60%, #fff 60%); }
.draw { height: 24px; margin-bottom: 10px; }
.screenmode { margin: 0 auto 26px 22px; }
.tools .dots { margin: 0 auto 0 28px; }

.document { flex: 1; min-width: 0; display: flex; flex-direction: column; }
.tabs { display: flex; height: 35px; background: #424242; border-bottom: 1px solid #3a3a3a; }
.tab { display: flex; align-items: center; padding: 0 9px 0 12px; gap: 8px; background: #535353; color: #f0f0f0; font-weight: bold; font-size: 14px; }
.tab .bare { font-size: 18px; }
.stage { flex: 1; min-height: 0; display: flex; }
.canvas { flex: 1; display: flex; padding: 24px 166px 22px 164px; background: #5f5f5f; }
.artboard { flex: 1; background: #fff; border: 1px solid #000; }
.vscroll, .pscroll { display: flex; flex-direction: column; align-items: center; justify-content: space-between; width: 18px; padding: 7px 0; background: #4a4a4a; color: #a0a0a0; }
.flip { transform: rotate(180deg); }
.thumb { background: #606060; }
.vscroll .thumb { width: 18px; height: 30px; border-radius: 8px; }
.status { display: flex; align-items: flex-start; height: 21px; padding-left: 4px; background: #535353; overflow: hidden; }
.status .field { height: 24px; margin-top: 2px; }
.zoomf { width: 86px; margin-right: 5px; }
.rot { margin-right: 11px; }
.pager { margin-top: 5px; }
.pagef { width: 74px; margin-left: 8px; }
.hscroll { flex: 1; display: flex; align-items: center; justify-content: flex-end; height: 21px; margin: 0 18px 0 12px; background: #4a4a4a; color: #a0a0a0; }
.hscroll .thumb { width: 32px; height: 18px; border-radius: 8px; margin-right: auto; margin-left: 702px; }
.hscroll .right { transform: rotate(-90deg); margin-right: 6px; }

/* Icon dock */
.dock { width: 48px; margin-left: 2px; background: #535353; }
.dock .collapse { padding-left: 32px; }
.dock-group { display: flex; flex-direction: column; align-items: center; padding: 5px 0 4px; border-bottom: 1px solid #383838; }
.dock-group .grip { margin-bottom: 1px; }
.dock-group button { height: 35px; display: flex; align-items: center; }
.dock-group svg { width: 24px; height: 24px; }

/* Properties panel */
.panel { width: 313px; margin-right: 1px; display: flex; flex-direction: column; background: #535353; }
.collapse.right { text-align: right; padding-right: 8px; }
.panel-tabs { display: flex; height: 34px; background: #424242; }
.panel-tabs button { padding: 0 14px 0 12px; color: #999; font-weight: 600; border-right: 1px solid #4b4b4b; border-bottom: 1px solid #383838; }
.panel-tabs .active { background: #535353; color: #fff; border-bottom-color: #535353; width: 83px; }
.burger { width: 13px; height: 11px; margin: 12px 7px 0 auto; background: repeating-linear-gradient(#aaa 0 1px, transparent 1px 3px); }
.panel-body { flex: 1; min-height: 0; display: flex; overflow: hidden; }
.props { flex: 1; overflow: hidden; }
.sel { padding: 14px 12px 11px; border-bottom: 1px solid #4a4a4a; }
.t2v { padding: 18px 8px 0 13px; height: 649px; border-bottom: 1px solid #474747; }
.t2v h2 { display: flex; align-items: center; gap: 10px; height: 16px; padding-left: 4px; }
.cap { display: block; margin: 18px 0 8px; }
.types { display: grid; grid-template-columns: 1fr 1fr; gap: 7px; margin-bottom: 7px; }
.types button { display: flex; align-items: center; gap: 10px; height: 33px; padding: 0 9px; border: 1px solid #606060; border-radius: 3px; background: #4a4a4a; color: #fff; }
.types svg { width: 18px; height: 18px; }
.types .on { background: #2f2f2f; color: #4a9cf5; }
.box { border: 1px solid #5c5c5c; background: #454545; padding: 0 11px; }
.styles-box { height: 143px; margin-bottom: 7px; }
.box-head { display: flex; align-items: center; gap: 8px; height: 42px; border-bottom: 2px solid #525252; font-size: 13px; }
.box-head .small { font-size: 12px; }
.caret { margin: 0 3px 0 auto; border: 6px solid transparent; border-top: 7px solid #c8c8c8; border-bottom: 0; }
.toggle-row { display: flex; justify-content: space-between; align-items: center; height: 48px; padding: 0 2px; }
.toggle-row input { appearance: none; width: 33px; height: 18px; border-radius: 9px; background: #808080; }
.toggle-row input::before { content: ""; display: block; width: 18px; height: 18px; border: 2px solid #ccc; border-radius: 50%; background: #6b6b6b; }
.asset-row { display: grid; grid-template-columns: 1fr 1fr; gap: 6px; padding-left: 2px; }
.asset-row button { display: flex; align-items: center; gap: 11px; height: 36px; padding: 0 10px; border: 1px solid #5c5c5c; border-radius: 3px; background: #4e4e4e; color: #767676; }
.asset-row svg { width: 22px; height: 22px; }
.settings-box { height: 161px; }
.settings-box .box-head { height: 52px; padding-bottom: 6px; margin-bottom: 25px; }
.settings-box input { appearance: none; display: block; width: 100%; height: 16px; margin: 9px 0 2px; background: linear-gradient(#767676, #767676) center/100% 3px no-repeat; }
.settings-box input::-webkit-slider-thumb { appearance: none; width: 16px; height: 16px; border: 3px solid #ccc; border-radius: 50%; background: #454545; }
.ends { display: flex; justify-content: space-between; }
.prompt-cap { margin: 8px 0; }
.prompt { display: flex; height: 54px; padding: 1px 4px 0 6px; border: 1px solid #606060; border-radius: 3px; background: #454545; color: #fff; }
.prompt textarea { flex: 1; min-width: 0; resize: none; overflow: hidden; }
.prompt svg { margin-top: 5px; }
.generate { display: flex; align-items: center; justify-content: center; gap: 7px; width: 100%; height: 34px; margin-top: 6px; border-radius: 3px; background: #595959; color: #7c7c7c; }
.info-row { display: flex; align-items: center; justify-content: space-between; padding: 25px 5px 0; }
.docsec { height: 161px; padding: 16px 8px 0 13px; border-bottom: 1px solid #474747; }
.form { display: grid; grid-template-columns: 87px 144px; gap: 10px 6px; margin-top: 13px; align-items: center; }
.form label { text-align: right; }
.selectwrap { position: relative; }
.selectwrap select { appearance: none; width: 100%; height: 26px; padding: 0 8px; border: 1px solid #606060; border-radius: 3px; background: #454545; color: #fff; }
.selectwrap svg { position: absolute; right: 5px; top: 9px; color: #fff; pointer-events: none; }
.ab-row { display: flex; align-items: center; justify-content: space-between; }
.ab-row .field { width: 94px; }
.form .outlined { height: 27px; margin: 0; }
.rulers { display: flex; padding: 15px 13px 0; gap: 16px; }
.rulers h3 { width: 94px; padding-top: 2px; }
.pscroll { width: 15px; padding: 5px 0; gap: 4px; margin-right: 1px; }
.pscroll .thumb { width: 12px; height: 602px; border-radius: 6px; margin-bottom: auto; }

/* Windows taskbar */
.taskbar { display: grid; grid-template-columns: 1fr auto 1fr; height: 59px; background: linear-gradient(90deg, #211d30 0, #241c38 30%, #2c193c 36%, #37192f 40%, #36231f 44%, #3b231f 56%, #48171d 63%, #49151c 68%, #401710 80%, #351a1c 100%); color: #fff; font: 15px/20px "Open Sans", sans-serif; }
.apps { display: flex; gap: 5px; align-items: center; padding-bottom: 1px; }
.apps button { display: flex; position: relative; align-items: center; justify-content: center; width: 50px; height: 50px; border-radius: 5px; }
.apps .current { background: #ffffff14; }
.current::after, .running::after { content: ""; position: absolute; bottom: 1px; width: 20px; height: 4px; border-radius: 2px; background: #b9a6e8; }
.running::after { width: 8px; background: #a89a9c; }
.tile { width: 28px; height: 27px; border-radius: 5px; font: bold 15px/25px "Open Sans", sans-serif; text-align: center; }
.ai { background: #330000; color: #ff9a00; }
.cp { background: #00302d; color: #00eec0; font-size: 16px; }
.tray { display: flex; align-items: center; justify-content: flex-end; padding: 0 26px 2px 0; }
.mic { margin: 0 24px 0 25px; }
.lang { text-align: center; margin-right: 21px; }
.vol { margin: 0 21px 0 9px; }
.clock { text-align: right; margin-right: 10px; }
```
